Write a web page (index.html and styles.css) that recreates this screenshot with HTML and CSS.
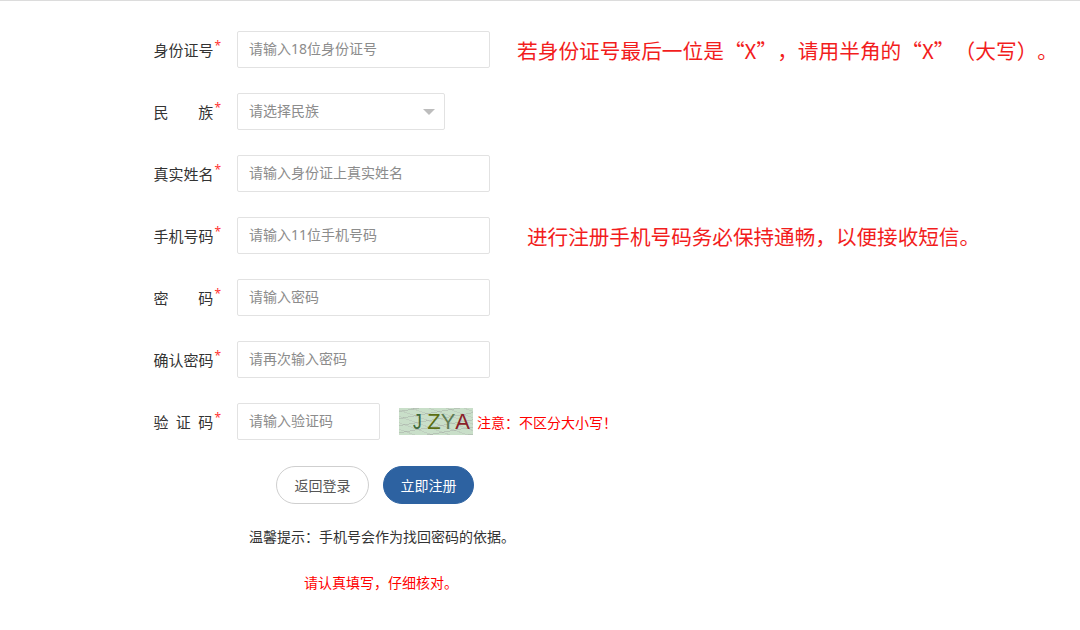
FILE: index.html
```html
<!DOCTYPE html>
<html lang="zh-CN">
<head>
<meta charset="utf-8">
<link rel="stylesheet" href="styles.css">
</head>
<body>
<div class="page">
  <form class="form">
    <div class="row">
      <label class="label"><span class="lt">身份证号</span><i class="req">*</i></label>
      <input class="field" placeholder="请输入18位身份证号">
      <span class="note note-id">若身份证号最后一位是<span class="q">“</span>X<span class="q">”</span>，请用半角的<span class="q">“</span>X<span class="q">”</span>（大写）。</span>
    </div>
    <div class="row">
      <label class="label"><span class="lt">民族</span><i class="req">*</i></label>
      <div class="select">
        <input class="field field-select" placeholder="请选择民族" readonly>
        <span class="caret"></span>
      </div>
    </div>
    <div class="row">
      <label class="label"><span class="lt">真实姓名</span><i class="req">*</i></label>
      <input class="field" placeholder="请输入身份证上真实姓名">
    </div>
    <div class="row">
      <label class="label"><span class="lt">手机号码</span><i class="req">*</i></label>
      <input class="field" placeholder="请输入11位手机号码">
      <span class="note note-phone">进行注册手机号码务必保持通畅，以便接收短信。</span>
    </div>
    <div class="row">
      <label class="label"><span class="lt">密码</span><i class="req">*</i></label>
      <input class="field" placeholder="请输入密码">
    </div>
    <div class="row">
      <label class="label"><span class="lt">确认密码</span><i class="req">*</i></label>
      <input class="field" placeholder="请再次输入密码">
    </div>
    <div class="row">
      <label class="label"><span class="lt">验证码</span><i class="req">*</i></label>
      <input class="field field-code" placeholder="请输入验证码">
      <div class="captcha"><span class="c1">J</span><span class="c2">Z</span><span class="c3">Y</span><span class="c4">A</span></div>
      <span class="hint">注意：不区分大小写！</span>
    </div>
    <div class="actions">
      <button type="button" class="btn btn-back">返回登录</button>
      <button type="button" class="btn btn-submit">立即注册</button>
    </div>
    <p class="tip">温馨提示：手机号会作为找回密码的依据。</p>
    <p class="warn">请认真填写，仔细核对。</p>
  </form>
</div>
</body>
</html>
```

FILE: styles.css
```css
* { box-sizing: border-box; }
html, body { margin: 0; padding: 0; background: #fff; }
body {
  font-family: "Noto Sans", "Noto Sans CJK SC", sans-serif;
  color: #333;
  border-top: 1px solid #dcdcdc;
  height: 630px;
  overflow: hidden;
  text-spacing-trim: space-all;
}
.page { padding: 30px 0 0 145px; }
.form { display: flex; flex-direction: column; }
.row {
  display: flex;
  align-items: center;
  height: 37px;
  margin-bottom: 25px;
}
.label {
  width: 76px;
  margin-right: 16px;
  display: flex;
  justify-content: flex-end;
  align-items: flex-start;
  font-size: 15px;
  color: #333;
  padding-left: 8px;
}
.lt {
  display: inline-block;
  width: 60px;
  text-align: justify;
  text-align-last: justify;
  white-space: nowrap;
  line-height: 20px;
}
.req {
  font-style: normal;
  color: #f33;
  font-size: 12px;
  line-height: 12px;
  margin-left: 1px;
}
.field {
  width: 253px;
  height: 37px;
  border: 1px solid #e2e2e2;
  border-radius: 2px;
  padding: 0 11px 2px;
  font-family: "Noto Sans", "Noto Sans CJK SC", sans-serif;
  font-size: 14px;
  color: #333;
  outline: none;
  background: #fff;
}
.field::placeholder { color: #8c8c8c; }
.select { position: relative; }
.field-select { width: 208px; cursor: default; }
.caret {
  position: absolute;
  right: 10px;
  top: 16px;
  width: 0; height: 0;
  border-left: 6px solid transparent;
  border-right: 6px solid transparent;
  border-top: 6px solid #bdbdbd;
}
.field-code { width: 143px; }
.note {
  color: #f21d1d;
  white-space: nowrap;
  font-family: "Noto Sans CJK SC", sans-serif;
  font-size: 20.7px;
  text-spacing-trim: space-all;
}
.q { font-feature-settings: "fwid" 1; }
.note-id { margin-left: 27px; }
.note-phone { margin-left: 37px; font-size: 20.6px; }
.captcha {
  margin-left: 19px;
  width: 74px;
  height: 27px;
  display: flex;
  align-items: center;
  justify-content: flex-end;
  padding-right: 3px;
  font-family: "Liberation Sans", sans-serif;
  font-size: 22px;
  line-height: 27px;
  background-color: #c9dfc9;
  background-image:
    repeating-linear-gradient(170deg, transparent 0 3px, rgba(150,150,150,0.35) 3px 4px, transparent 4px 7px),
    repeating-linear-gradient(20deg, transparent 0 5px, rgba(170,170,170,0.3) 5px 6px);
}
.c1 { color: #3d6b3d; margin-right: 4px; font-weight: 300; transform: scaleX(0.8); }
.c2 { color: #5c6e12; }
.c3 { color: #5f7d55; }
.c4 { color: #8a1f2a; }
.hint {
  margin-left: 4px;
  color: #f00;
  font-size: 14px;
  font-family: "Noto Sans CJK SC", sans-serif;
  white-space: nowrap;
}
.actions {
  display: flex;
  gap: 14px;
  margin: 1px 0 0 131px;
}
.btn {
  height: 38px;
  border-radius: 19px;
  font-family: "Noto Sans CJK SC", sans-serif;
  font-size: 14px;
  cursor: pointer;
}
.btn-back {
  width: 93px;
  background: #fff;
  border: 1px solid #cfcfcf;
  color: #555;
}
.btn-submit {
  width: 91px;
  background: #2d62a1;
  border: 1px solid #2d62a1;
  color: #fff;
}
.tip {
  margin: 23px 0 0 104px;
  font-size: 14px;
  color: #333;
  line-height: 19px;
  font-family: "Noto Sans CJK SC", sans-serif;
}
.warn {
  margin: 27px 0 0 159px;
  font-size: 14px;
  color: #f00;
  line-height: 19px;
  font-family: "Noto Sans CJK SC", sans-serif;
}
```
